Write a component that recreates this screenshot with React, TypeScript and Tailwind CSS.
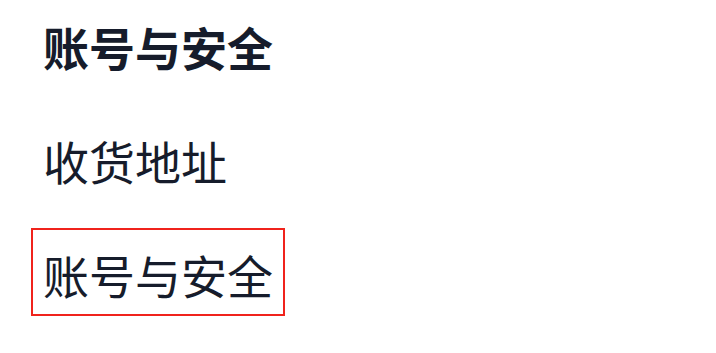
export default function App() {
  const font = { fontFamily: '"Noto Sans CJK SC", "Noto Sans", sans-serif' };
  return (
    <div className="w-[716px] h-[353px] bg-white overflow-hidden" style={font}>
      <div className="flex flex-col gap-[26px] pl-[31px]">
        <div className="h-[88px] flex items-center px-[10px] border-2 border-transparent self-start">
          <span className="text-[46px] leading-none font-bold text-[#161c2b] pt-[4px]">账号与安全</span>
        </div>
        <div className="h-[88px] flex items-center px-[10px] border-2 border-transparent self-start">
          <span className="text-[46px] leading-none text-[#161c2b] pt-[4px]">收货地址</span>
        </div>
        <div className="h-[88px] flex items-center px-[10px] border-2 border-[#f0231c] self-start">
          <span className="text-[46px] leading-none text-[#161c2b] pt-[4px]">账号与安全</span>
        </div>
      </div>
    </div>
  );
}
